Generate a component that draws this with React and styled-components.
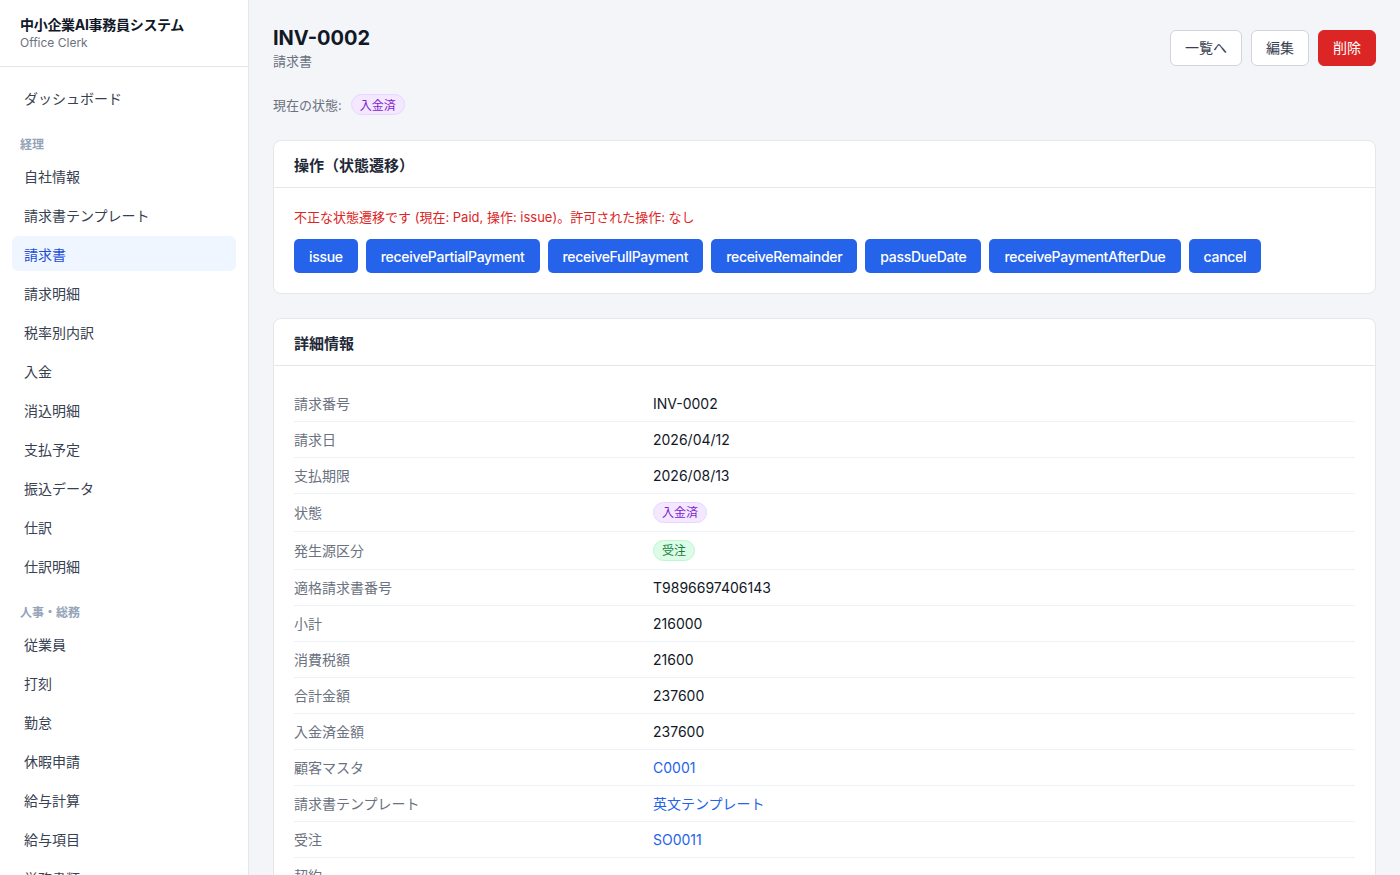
import React from "react";
import styled, { createGlobalStyle } from "styled-components";

const Global = createGlobalStyle`
  html, body { margin: 0; padding: 0; }
  body {
    font-family: Inter, "Noto Sans CJK JP", "Noto Sans", sans-serif;
    color: #111827;
    background: #f3f5f9;
  }
  * { box-sizing: border-box; }
`;

const Layout = styled.div`
  display: flex;
  height: 100vh;
  overflow: hidden;
`;

const Sidebar = styled.aside`
  width: 249px;
  flex-shrink: 0;
  background: #ffffff;
  border-right: 1px solid #e5e7eb;
  overflow: hidden;
`;

const Brand = styled.div`
  padding: 15px 20px 15px;
  border-bottom: 1px solid #e5e7eb;
`;

const BrandTitle = styled.div`
  font-size: 14px;
  font-weight: 700;
  line-height: 20px;
  letter-spacing: -0.3px;
  color: #111827;
`;

const BrandSub = styled.div`
  font-size: 12px;
  line-height: 16px;
  color: #6b7280;
`;

const Nav = styled.nav`
  padding: 13px 12px;
  display: flex;
  flex-direction: column;
`;

const NavItem = styled.a`
  display: flex;
  align-items: center;
  height: 35px;
  margin-bottom: 4px;
  padding: 0 12px;
  border-radius: 6px;
  font-size: 14px;
  color: ${(p) => (p.$active ? "#1d4ed8" : "#374151")};
  background: ${(p) => (p.$active ? "#eff6ff" : "transparent")};
  text-decoration: none;
  cursor: pointer;
`;

const NavSection = styled.div`
  margin-top: 18px;
  margin-bottom: 5px;
  padding: 0 8px;
  font-size: 12px;
  line-height: 16px;
  font-weight: 600;
  color: #94a3b8;
`;

const Main = styled.main`
  flex: 1;
  min-width: 0;
  padding: 24px 24px;
  overflow: hidden;
`;

const PageHeader = styled.div`
  display: flex;
  justify-content: space-between;
  align-items: flex-start;
`;

const Title = styled.h1`
  margin: 0;
  font-size: 20px;
  line-height: 28px;
  font-weight: 700;
  color: #111827;
`;

const Subtitle = styled.div`
  margin-top: 0;
  font-size: 13px;
  line-height: 18px;
  color: #6b7280;
`;

const Actions = styled.div`
  display: flex;
  gap: 9px;
  margin-top: 6px;
`;

const Button = styled.button`
  height: 36px;
  padding: 0 14px 2px;
  border-radius: 6px;
  font-family: inherit;
  font-size: 14px;
  cursor: pointer;
  border: 1px solid ${(p) => (p.$danger ? "#dc2626" : "#d1d5db")};
  background: ${(p) => (p.$danger ? "#dc2626" : "#ffffff")};
  color: ${(p) => (p.$danger ? "#ffffff" : "#374151")};
`;

const StatusLine = styled.div`
  display: flex;
  align-items: center;
  gap: 9px;
  margin-top: 24px;
  font-size: 13px;
  color: #6b7280;
`;

const Badge = styled.span`
  display: inline-flex;
  align-items: center;
  height: 21px;
  padding: 0 8px;
  border-radius: 999px;
  font-size: 12px;
  border: 1px solid ${(p) => (p.$tone === "green" ? "#bbf7d0" : "#e9d5ff")};
  background: ${(p) => (p.$tone === "green" ? "#dcfce7" : "#f3e8ff")};
  color: ${(p) => (p.$tone === "green" ? "#15803d" : "#7e22ce")};
`;

const Card = styled.section`
  margin-top: ${(p) => p.$mt || 24}px;
  background: #ffffff;
  border: 1px solid #e5e7eb;
  border-radius: 8px;
`;

const CardHeader = styled.div`
  height: 47px;
  display: flex;
  align-items: center;
  padding: 0 20px;
  border-bottom: 1px solid #e5e7eb;
`;

const CardTitle = styled.h2`
  margin: 0;
  font-size: 15px;
  font-weight: 700;
  color: #1f2937;
`;

const CardBody = styled.div`
  padding: ${(p) => p.$pad || "20px 20px 20px"};
`;

const ErrorText = styled.div`
  font-size: 13px;
  line-height: 18px;
  color: #dc2626;
`;

const TransitionRow = styled.div`
  display: flex;
  flex-wrap: wrap;
  gap: 8px;
  margin-top: 13px;
`;

const TransitionButton = styled.button`
  height: 34px;
  padding: 0 15px;
  border: none;
  border-radius: 5px;
  background: #2563eb;
  color: #ffffff;
  font-family: inherit;
  font-size: 14px;
  font-weight: 500;
  letter-spacing: -0.3px;
  cursor: pointer;
`;

const Row = styled.div`
  display: grid;
  grid-template-columns: 359px 1fr;
  align-items: center;
  padding: 8px 0;
  border-bottom: 1px solid #eef1f5;
  font-size: 14px;
  line-height: 19px;
`;

const Label = styled.div`
  color: #6b7280;
`;

const Value = styled.div`
  color: #111827;
  display: flex;
  align-items: center;
`;

const Link = styled.a`
  color: #2563eb;
  text-decoration: none;
  cursor: pointer;
`;

const accounting = [
  "自社情報",
  "請求書テンプレート",
  "請求書",
  "請求明細",
  "税率別内訳",
  "入金",
  "消込明細",
  "支払予定",
  "振込データ",
  "仕訳",
  "仕訳明細",
];

const hr = ["従業員", "打刻", "勤怠", "休暇申請", "給与計算", "給与項目", "労務書類", "契約書"];

const transitions = [
  "issue",
  "receivePartialPayment",
  "receiveFullPayment",
  "receiveRemainder",
  "passDueDate",
  "receivePaymentAfterDue",
  "cancel",
];

const details = [
  ["請求番号", "INV-0002"],
  ["請求日", "2026/04/12"],
  ["支払期限", "2026/08/13"],
  ["状態", { badge: "入金済", tone: "purple" }],
  ["発生源区分", { badge: "受注", tone: "green" }],
  ["適格請求書番号", "T9896697406143"],
  ["小計", "216000"],
  ["消費税額", "21600"],
  ["合計金額", "237600"],
  ["入金済金額", "237600"],
  ["顧客マスタ", { link: "C0001" }],
  ["請求書テンプレート", { link: "英文テンプレート" }],
  ["受注", { link: "SO0011" }],
  ["契約", ""],
  ["備考", ""],
];

function renderValue(v) {
  if (typeof v === "string") return v;
  if (v.badge) return <Badge $tone={v.tone}>{v.badge}</Badge>;
  if (v.link) return <Link>{v.link}</Link>;
  return null;
}

export default function App() {
  return (
    <>
      <Global />
      <Layout>
        <Sidebar>
          <Brand>
            <BrandTitle>中小企業AI事務員システム</BrandTitle>
            <BrandSub>Office Clerk</BrandSub>
          </Brand>
          <Nav>
            <NavItem>ダッシュボード</NavItem>
            <NavSection>経理</NavSection>
            {accounting.map((n) => (
              <NavItem key={n} $active={n === "請求書"}>
                {n}
              </NavItem>
            ))}
            <NavSection>人事・総務</NavSection>
            {hr.map((n) => (
              <NavItem key={n}>{n}</NavItem>
            ))}
          </Nav>
        </Sidebar>
        <Main>
          <PageHeader>
            <div>
              <Title>INV-0002</Title>
              <Subtitle>請求書</Subtitle>
            </div>
            <Actions>
              <Button>一覧へ</Button>
              <Button>編集</Button>
              <Button $danger>削除</Button>
            </Actions>
          </PageHeader>
          <StatusLine>
            現在の状態:
            <Badge $tone="purple">入金済</Badge>
          </StatusLine>
          <Card $mt={25}>
            <CardHeader>
              <CardTitle>操作（状態遷移）</CardTitle>
            </CardHeader>
            <CardBody>
              <ErrorText>
                不正な状態遷移です (現在: Paid, 操作: issue)。許可された操作: なし
              </ErrorText>
              <TransitionRow>
                {transitions.map((t) => (
                  <TransitionButton key={t}>{t}</TransitionButton>
                ))}
              </TransitionRow>
            </CardBody>
          </Card>
          <Card $mt={24}>
            <CardHeader>
              <CardTitle>詳細情報</CardTitle>
            </CardHeader>
            <CardBody $pad="20px 20px 20px">
              {details.map(([k, v]) => (
                <Row key={k}>
                  <Label>{k}</Label>
                  <Value>{renderValue(v)}</Value>
                </Row>
              ))}
            </CardBody>
          </Card>
        </Main>
      </Layout>
    </>
  );
}
